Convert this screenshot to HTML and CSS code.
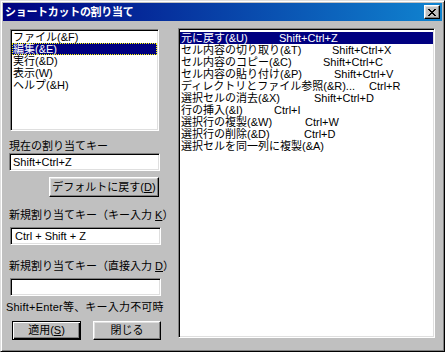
FILE: index.html
```html
<!DOCTYPE html>
<html>
<head>
  <meta charset="utf-8">
  <title>ショートカットの割り当て</title>
  <link rel="stylesheet" href="styles.css">
</head>
<body>
  <div class="window">
    <div class="titlebar">
      <span class="title">ショートカットの割り当て</span>
      <button class="close-btn" aria-label="閉じる">
        <svg width="8" height="7" viewBox="0 0 8 7"><path d="M0 0h2v1h1v1h2V1h1V0h2v1H7v1H6v1H5v1h1v1h1v1h1v1H6V6H5V5H3v1H2v1H0V6h1V5h1V4h1V3H2V2H1V1H0z" fill="#000"/></svg>
      </button>
    </div>

    <div class="dialog-body">
      <div class="left-col">
        <ul class="listbox menu-list">
          <li>ファイル(&amp;F)</li>
          <li class="selected focused">編集(&amp;E)</li>
          <li>実行(&amp;D)</li>
          <li>表示(W)</li>
          <li>ヘルプ(&amp;H)</li>
        </ul>

        <p class="label label-current">現在の割り当てキー</p>
        <div class="textbox">Shift+Ctrl+Z</div>

        <div class="default-row">
          <button class="btn btn-reset">デフォルトに戻す(<u>D</u>)</button>
        </div>

        <p class="label label-keyin">新規割り当てキー（キー入力 <u>K</u>）</p>
        <div class="textbox textbox-keyin">Ctrl + Shift + Z</div>

        <p class="label label-direct">新規割り当てキー（直接入力 <u>D</u>）</p>
        <div class="textbox textbox-keyin"></div>

        <p class="label note">Shift+Enter等、キー入力不可時</p>

        <div class="btn-row">
          <button class="btn btn-apply">適用(<u>S</u>)</button>
          <button class="btn btn-close">閉じる</button>
        </div>
      </div>

      <!-- コマンド一覧 -->
      <ul class="listbox command-list">
        <li class="selected"><span class="cmd" style="width:98px">元に戻す(&amp;U)</span>Shift+Ctrl+Z</li>
        <li><span class="cmd" style="width:151px">セル内容の切り取り(&amp;T)</span>Shift+Ctrl+X</li>
        <li><span class="cmd" style="width:142px">セル内容のコピー(&amp;C)</span>Shift+Ctrl+C</li>
        <li><span class="cmd" style="width:153px">セル内容の貼り付け(&amp;P)</span>Shift+Ctrl+V</li>
        <li><span class="cmd" style="width:188px">ディレクトリとファイル参照(&amp;R)...</span>Ctrl+R</li>
        <li><span class="cmd" style="width:133px">選択セルの消去(&amp;X)</span>Shift+Ctrl+D</li>
        <li><span class="cmd" style="width:93px">行の挿入(&amp;I)</span>Ctrl+I</li>
        <li><span class="cmd" style="width:124px">選択行の複製(&amp;W)</span>Ctrl+W</li>
        <li><span class="cmd" style="width:123px">選択行の削除(&amp;D)</span>Ctrl+D</li>
        <li><span class="cmd">選択セルを同一列に複製(&amp;A)</span></li>
      </ul>
    </div>
  </div>
</body>
</html>
```

FILE: styles.css
```css
body {
  margin: 0;
  padding: 0;
  font-family: "Liberation Sans", "Noto Sans CJK JP", sans-serif;
  font-size: 11px;
  color: #000;
}

/* ウィンドウ枠 */
.window {
  width: 445px;
  height: 352px;
  box-sizing: border-box;
  background: #c0c0c0;
  border-top: 1px solid #dfdfdf;
  border-left: 1px solid #dfdfdf;
  border-right: 1px solid #000;
  border-bottom: 1px solid #000;
  box-shadow: inset 1px 1px #fff, inset -1px -1px #808080;
  padding: 2px;
}

.titlebar {
  height: 18px;
  display: flex;
  align-items: center;
  justify-content: space-between;
  background: linear-gradient(to right, #000080, #1084d0);
  padding: 0 2px 0 2px;
}

.title {
  color: #fff;
  font-weight: bold;
  font-size: 11px;
  line-height: 14px;
  letter-spacing: -0.3px;
}

.close-btn {
  width: 16px;
  height: 14px;
  padding: 0;
  display: flex;
  align-items: center;
  justify-content: center;
  background: #c0c0c0;
  border-top: 1px solid #fff;
  border-left: 1px solid #fff;
  border-right: 1px solid #000;
  border-bottom: 1px solid #000;
  box-shadow: inset -1px -1px #808080, inset 1px 1px #dfdfdf;
}

.dialog-body {
  display: flex;
  padding: 7px 7px 0 6px;
}

.left-col {
  width: 152px;
  flex-shrink: 0;
  display: flex;
  flex-direction: column;
}

/* 凹んだ枠 */
.listbox,
.textbox {
  box-sizing: border-box;
  background: #fff;
  border-top: 1px solid #808080;
  border-left: 1px solid #808080;
  border-right: 1px solid #fff;
  border-bottom: 1px solid #fff;
  box-shadow: inset 1px 1px #000, inset -1px -1px #dfdfdf;
}

.listbox {
  list-style: none;
  margin: 0;
  padding: 1px;
  line-height: 12px;
  white-space: nowrap;
}

.listbox li {
  height: 12px;
  padding-left: 1px;
}

.listbox li.selected {
  background: #000080;
  color: #fff;
}

.listbox li.focused {
  outline: 1px dotted #ffff00;
  outline-offset: -1px;
}

.menu-list {
  width: 149px;
  height: 102px;
  margin-top: 1px;
  margin-left: 1px;
}

.command-list {
  width: 257px;
  height: 310px;
  margin-left: 17px;
  padding-top: 3px;
}

.command-list li {
  display: flex;
}

.cmd {
  flex-shrink: 0;
}

.label {
  margin: 0;
  line-height: 14px;
  white-space: nowrap;
}

.label-current {
  margin-top: 8px;
}

.label-keyin {
  margin-top: 11px;
}

.label-direct {
  margin-top: 14px;
}

.note {
  margin-top: 4px;
  margin-left: -3px;
  letter-spacing: 0.2px;
}

.textbox {
  width: 151px;
  height: 18px;
  padding-left: 3px;
  line-height: 16px;
}

.textbox-keyin {
  margin-top: 5px;
  margin-left: 1px;
  padding-left: 4px;
}

.btn {
  font-family: inherit;
  font-size: 11px;
  padding: 0;
  height: 19px;
  line-height: 15px;
  background: #c0c0c0;
  color: #000;
  border-top: 1px solid #fff;
  border-left: 1px solid #fff;
  border-right: 1px solid #000;
  border-bottom: 1px solid #000;
  box-shadow: inset -1px -1px #808080, inset 1px 1px #dfdfdf;
}

.default-row {
  margin-top: 6px;
  display: flex;
  justify-content: flex-end;
  padding-right: 2px;
}

.btn-reset {
  width: 110px;
  height: 20px;
}

.btn-row {
  display: flex;
  gap: 12px;
  margin-top: 7px;
  margin-left: 3px;
}

.btn-apply {
  width: 70px;
  border: 1px solid #000;
  box-shadow: inset 1px 1px #fff, inset -1px -1px #000, inset -2px -2px #808080;
}

.btn-close {
  width: 69px;
}
```
